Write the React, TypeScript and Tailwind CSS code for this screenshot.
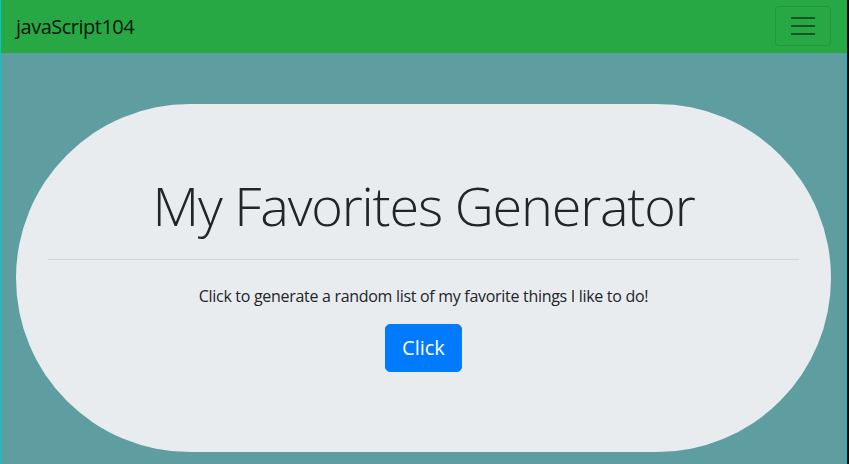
export default function App() {
  return (
    <div className="min-h-[464px] bg-black font-['Open_Sans',sans-serif] text-[#212529]">
      <div className="w-[847px] min-h-[464px] bg-[#5f9ea0] border-l border-[#00c8d2]">
        {/* Navbar */}
        <nav className="h-[53px] bg-[#28a745] flex items-center justify-between pl-[15px] pr-[16px]">
          <span className="text-[20px] leading-[30px] text-black/90 tracking-[-0.5px]">javaScript104</span>
          <button className="w-[56px] h-[40px] -mt-[1px] rounded-[4px] border border-black/10 flex flex-col items-center justify-center gap-[6px]">
            <span className="block w-[24px] h-[2px] bg-black/50" />
            <span className="block w-[24px] h-[2px] bg-black/50" />
            <span className="block w-[24px] h-[2px] bg-black/50" />
          </button>
        </nav>

        <div className="border-r border-[#00c8d2] pt-[51px] pb-[12px]">
          {/* Jumbotron */}
          <div className="mx-[15px] rounded-full bg-[#e9ecef] px-8 pt-16 pb-16 text-center">
            <h1 className="text-[54px] leading-[75px] font-light tracking-[-1.2px] mb-2">
              My Favorites Generator
            </h1>
            <hr className="border-t border-black/10 mt-4 mb-6" />
            <p className="text-[16px] leading-6 tracking-[-0.3px] mb-4">
              Click to generate a random list of my favorite things I like to do!
            </p>
            <div className="mb-4">
              <button className="bg-[#007bff] text-white text-[20px] leading-[30px] px-4 py-2 rounded-[5px] border border-[#007bff]">
                Click
              </button>
            </div>
          </div>
        </div>
      </div>
    </div>
  );
}
